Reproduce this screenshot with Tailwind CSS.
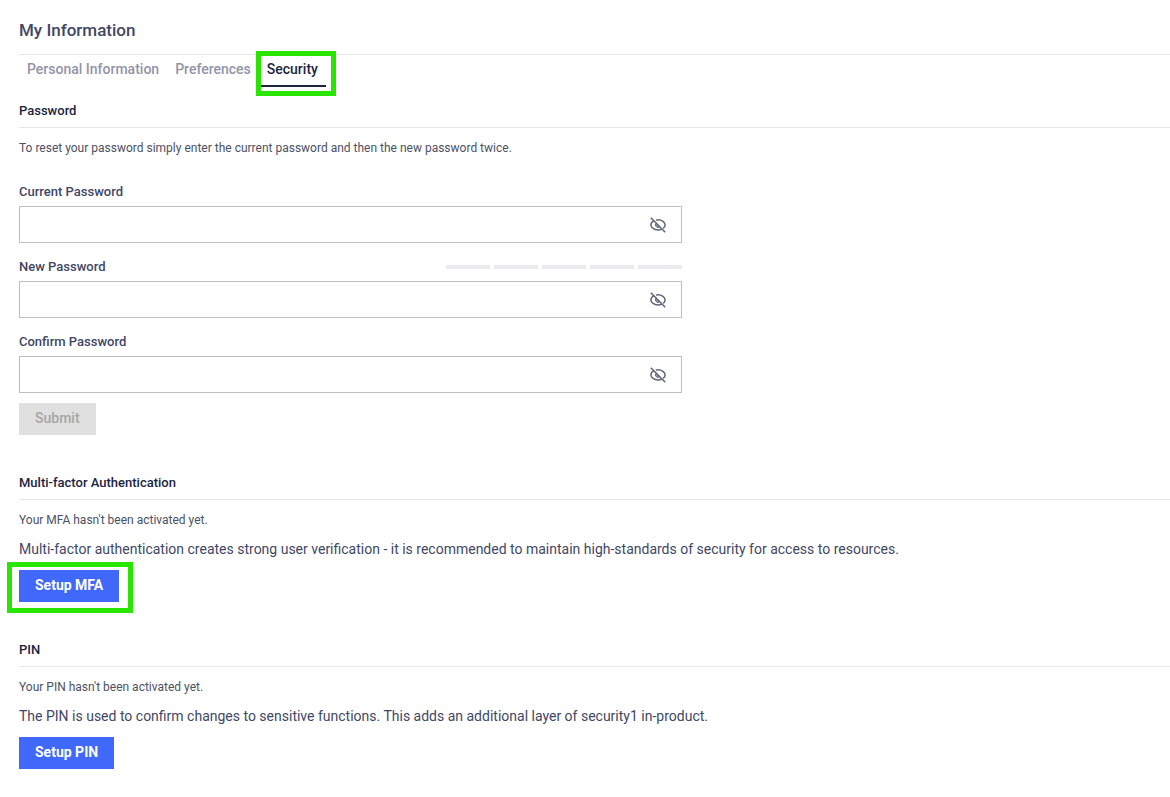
<!DOCTYPE html>
<html lang="en">
<head>
<meta charset="utf-8">
<meta name="viewport" content="width=device-width, initial-scale=1">
<title>My Information</title>
<script src="https://cdn.jsdelivr.net/npm/@tailwindcss/browser@4"></script>
</head>
<body class="bg-white font-['Roboto',sans-serif] text-[#3f4765]">
<svg class="hidden" aria-hidden="true">
  <symbol id="eye-off" viewBox="0 0 16 16">
    <path d="M4.200 3.600C2.200 4.500.9 6.200.9 8c0 2.700 3.300 4.900 7.100 4.900 1.400 0 2.700-.3 3.800-.8M5.900 3.100C6.600 2.900 7.300 2.800 8 2.800c3.800 0 7.100 2.300 7.100 5.200 0 1.200-.7 2.400-1.900 3.300" fill="none" stroke="currentColor" stroke-width="1.500"/>
    <path d="M6.200 6.100a2.500 2.500 0 1 0 3.700 3.500z" fill="currentColor" fill-opacity=".6" stroke="currentColor" stroke-width="1"/>
    <path d="M.8.8 15.200 15.200" stroke="currentColor" stroke-width="1.500"/>
  </symbol>
</svg>
<main class="flex flex-col pl-[19px] pb-7">
  <header class="border-b border-[#e6e7ed] pt-[18px] pb-3">
    <h1 class="text-[17px] leading-6 font-medium">My Information</h1>
  </header>
  <nav class="flex h-8 text-sm font-medium text-[#9195a9]">
    <a href="#personal" class="px-2 pt-1 leading-5">Personal Information</a>
    <a href="#preferences" class="px-2 pt-1 leading-5">Preferences</a>
    <a href="#security" aria-current="page" class="relative border-b-2 border-[#1b2540] px-2 pt-1 leading-5 text-[#1b2540]">Security<span class="absolute -top-1 -right-[10px] -bottom-[11px] -left-[3px] border-5 border-[#28e600]"></span></a>
  </nav>

  <section class="pt-2">
    <h2 class="border-b border-[#e6e7ed] text-[13px] leading-8 font-medium text-[#1b2540]">Password</h2>
    <p class="mt-[10px] text-xs leading-5 text-[#4c5165]">To reset your password simply enter the current password and then the new password twice.</p>
    <form class="mt-6 w-full max-w-[663px]">
      <div class="mb-[14px]">
        <label for="current" class="mb-1 block text-[13px] leading-5 font-medium">Current Password</label>
        <div class="flex h-[37px] items-center border border-[#bfbfbf] pr-[15px]">
          <input id="current" type="password" class="h-full min-w-0 flex-1 px-3 text-sm outline-none">
          <button type="button" aria-label="Show current password" class="text-[#5f6578]"><svg class="block size-4"><use href="#eye-off"/></svg></button>
        </div>
      </div>
      <div class="mb-[14px]">
        <div class="mb-1 flex items-center justify-between">
          <label for="new" class="text-[13px] leading-5 font-medium">New Password</label>
          <div class="flex gap-1">
            <span class="h-1 w-11 bg-[#e9ebf1]"></span>
            <span class="h-1 w-11 bg-[#e9ebf1]"></span>
            <span class="h-1 w-11 bg-[#e9ebf1]"></span>
            <span class="h-1 w-11 bg-[#e9ebf1]"></span>
            <span class="h-1 w-11 bg-[#e9ebf1]"></span>
          </div>
        </div>
        <div class="flex h-[37px] items-center border border-[#bfbfbf] pr-[15px]">
          <input id="new" type="password" class="h-full min-w-0 flex-1 px-3 text-sm outline-none">
          <button type="button" aria-label="Show new password" class="text-[#5f6578]"><svg class="block size-4"><use href="#eye-off"/></svg></button>
        </div>
      </div>
      <div class="mb-[10px]">
        <label for="confirm" class="mb-1 block text-[13px] leading-5 font-medium">Confirm Password</label>
        <div class="flex h-[37px] items-center border border-[#bfbfbf] pr-[15px]">
          <input id="confirm" type="password" class="h-full min-w-0 flex-1 px-3 text-sm outline-none">
          <button type="button" aria-label="Show confirmed password" class="text-[#5f6578]"><svg class="block size-4"><use href="#eye-off"/></svg></button>
        </div>
      </div>
      <button type="submit" disabled class="block h-8 bg-[#e0e0e0] px-4 pb-[2px] text-sm font-medium text-[#a6a6a6]">Submit</button>
    </form>
  </section>

  <section class="pt-8">
    <h2 class="border-b border-[#e6e7ed] text-[13px] leading-8 font-medium text-[#1b2540]">Multi-factor Authentication</h2>
    <p class="mt-[10px] text-xs leading-5 text-[#4c5165]">Your MFA hasn't been activated yet.</p>
    <p class="mt-[9px] mb-[11px] text-sm leading-5">Multi-factor authentication creates strong user verification - it is recommended to maintain high-standards of security for access to resources.</p>
    <div class="relative w-fit">
      <button type="button" class="block h-8 bg-[#4068fb] px-4 pb-[2px] text-sm font-bold text-white">Setup MFA</button>
      <span class="pointer-events-none absolute -top-2 -right-[14px] -bottom-[11px] -left-3 border-5 border-[#28e600]"></span>
    </div>
  </section>

  <section class="pt-8">
    <h2 class="border-b border-[#e6e7ed] text-[13px] leading-8 font-medium text-[#1b2540]">PIN</h2>
    <p class="mt-[10px] text-xs leading-5 text-[#4c5165]">Your PIN hasn't been activated yet.</p>
    <p class="mt-[9px] mb-[11px] text-sm leading-5">The PIN is used to confirm changes to sensitive functions. This adds an additional layer of security1 in-product.</p>
    <button type="button" class="block h-8 bg-[#4068fb] px-4 pb-[2px] text-sm font-bold text-white">Setup PIN</button>
  </section>
</main>
</body>
</html>
